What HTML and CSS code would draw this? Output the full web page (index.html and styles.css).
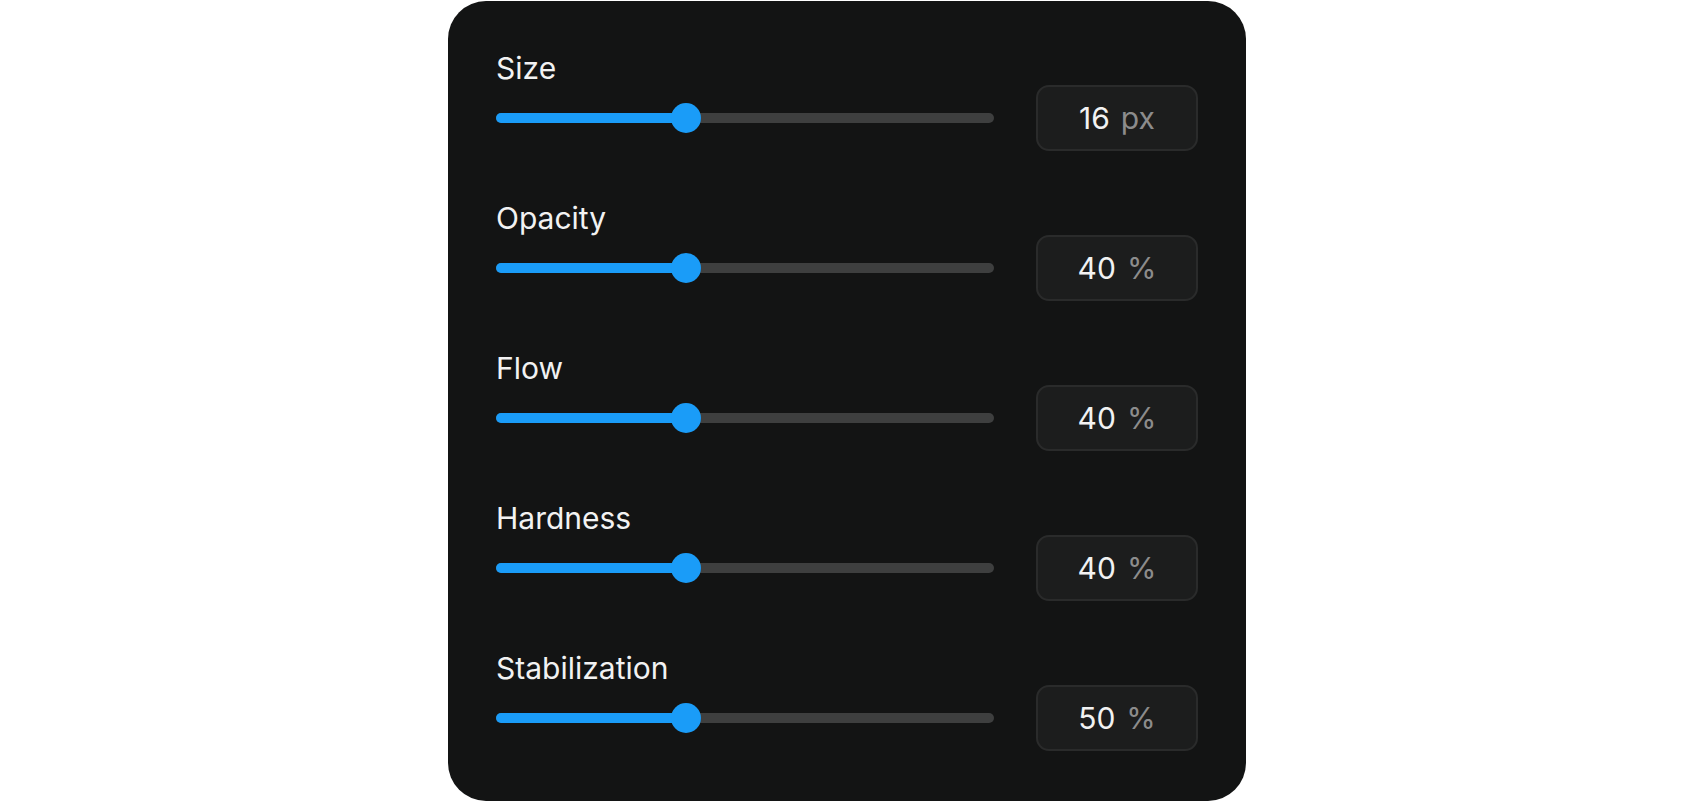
FILE: index.html
```html
<!DOCTYPE html>
<html lang="en">
<head>
<meta charset="utf-8">
<title>Brush settings</title>
<link rel="stylesheet" href="styles.css">
</head>
<body>
<div class="panel">
  <div class="setting">
    <div class="label">Size</div>
    <div class="control">
      <div class="slider" role="slider" aria-valuenow="16"><div class="fill" style="width:190px"></div><div class="thumb" style="left:190px"></div></div>
      <div class="field"><span class="value">16</span><span class="unit">px</span></div>
    </div>
  </div>
  <div class="setting">
    <div class="label">Opacity</div>
    <div class="control">
      <div class="slider" role="slider" aria-valuenow="40"><div class="fill" style="width:190px"></div><div class="thumb" style="left:190px"></div></div>
      <div class="field"><span class="value">40</span><span class="unit">%</span></div>
    </div>
  </div>
  <div class="setting">
    <div class="label">Flow</div>
    <div class="control">
      <div class="slider" role="slider" aria-valuenow="40"><div class="fill" style="width:190px"></div><div class="thumb" style="left:190px"></div></div>
      <div class="field"><span class="value">40</span><span class="unit">%</span></div>
    </div>
  </div>
  <div class="setting">
    <div class="label">Hardness</div>
    <div class="control">
      <div class="slider" role="slider" aria-valuenow="40"><div class="fill" style="width:190px"></div><div class="thumb" style="left:190px"></div></div>
      <div class="field"><span class="value">40</span><span class="unit">%</span></div>
    </div>
  </div>
  <div class="setting">
    <div class="label">Stabilization</div>
    <div class="control">
      <div class="slider" role="slider" aria-valuenow="50"><div class="fill" style="width:190px"></div><div class="thumb" style="left:190px"></div></div>
      <div class="field"><span class="value">50</span><span class="unit">%</span></div>
    </div>
  </div>
</div>
</body>
</html>
```
FILE: styles.css
```css
html, body {
  margin: 0;
  padding: 0;
  background: #ffffff;
}
body {
  height: 802px;
  display: flex;
  align-items: center;
  justify-content: center;
  font-family: Inter, "Noto Sans", sans-serif;
}
.panel {
  box-sizing: border-box;
  width: 798px;
  height: 800px;
  background: #131414;
  border-radius: 38px;
  padding: 50px 48px;
  display: flex;
  flex-direction: column;
  gap: 50px;
}
.setting {
  display: flex;
  flex-direction: column;
}
.label {
  font-size: 30px;
  line-height: 34px;
  color: #f2f2f2;
  font-weight: 400;
}
.control {
  display: flex;
  align-items: center;
  gap: 42px;
  height: 66px;
}
.slider {
  position: relative;
  flex: 1;
  height: 10px;
  border-radius: 5px;
  background: #3e3f3f;
}
.fill {
  height: 100%;
  border-radius: 5px;
  background: #1a9cf8;
}
.thumb {
  position: absolute;
  top: 50%;
  width: 30px;
  height: 30px;
  margin: -15px 0 0 -15px;
  border-radius: 50%;
  background: #1a9cf8;
}
.field {
  box-sizing: border-box;
  width: 162px;
  height: 66px;
  border: 2px solid #2a2b2b;
  border-radius: 13px;
  background: #1c1d1d;
  display: flex;
  align-items: center;
  justify-content: center;
  gap: 11px;
  font-size: 30px;
}
.value {
  color: #f2f2f2;
}
.unit {
  color: #8c8c8c;
}
```
